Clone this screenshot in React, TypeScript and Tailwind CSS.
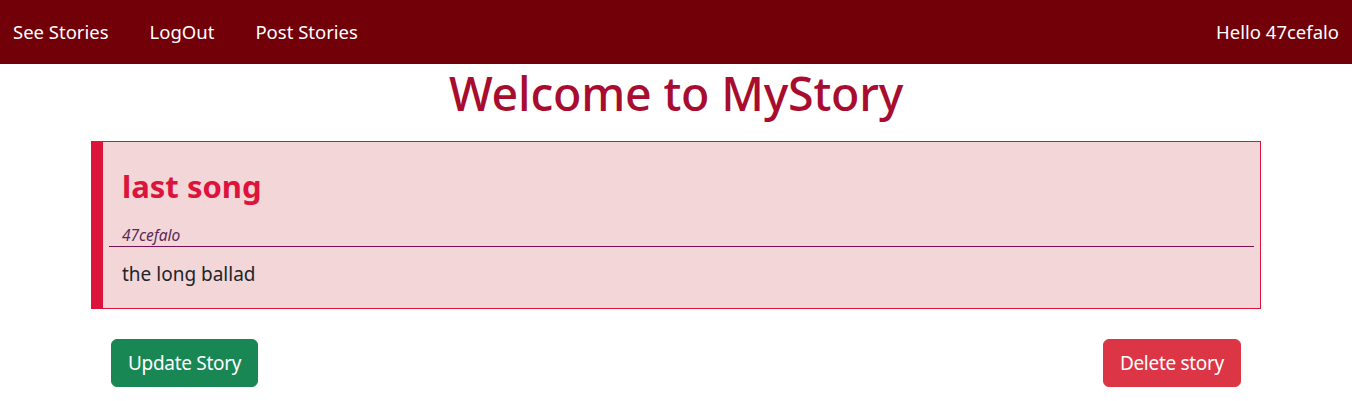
export default function App() {
  return (
    <div className="min-h-screen bg-white font-['Noto_Sans',sans-serif]">
      {/* Navbar */}
      <nav className="h-16 bg-[#720008] flex items-center justify-between px-[13px] text-white text-[18.5px]">
        <div className="flex items-center gap-[41px]">
          <a href="#">See Stories</a>
          <a href="#">LogOut</a>
          <a href="#">Post Stories</a>
        </div>
        <span>Hello 47cefalo</span>
      </nav>

      <h1 className="text-center text-[46.5px] leading-[1.2] font-medium tracking-[-0.2px] text-[#a80c2e] mt-[2px]">
        Welcome to MyStory
      </h1>

      {/* Story card */}
      <div className="mx-[91px] mt-[19px] h-[168px] bg-[#f2d6d8] border border-[#dc143c] border-l-[12px] px-[6px]">
        <h2 className="pl-[13px] pt-[26px] text-[31px] leading-[1.2] font-bold text-[#dc143c]">
          last song
        </h2>
        <div className="mt-[22px] border-b border-[#7a1050] pl-[13px] pb-[2px] leading-none">
          <span className="italic text-[15.5px] leading-[17px] text-[#5a2a5a]">47cefalo</span>
        </div>
        <p className="pl-[13px] mt-[13px] text-[19px] leading-[1.5] text-[#212529]">
          the long ballad
        </p>
      </div>

      {/* Actions */}
      <div className="mx-[111px] mt-[30px] flex justify-between">
        <button className="bg-[#198754] text-white text-[19px] leading-[30px] tracking-[-0.3px] px-4 py-2 rounded-md border border-[#198754]">
          Update Story
        </button>
        <button className="bg-[#dc3545] text-white text-[19px] leading-[30px] tracking-[-0.3px] px-4 py-2 rounded-md border border-[#dc3545]">
          Delete story
        </button>
      </div>
    </div>
  );
}
